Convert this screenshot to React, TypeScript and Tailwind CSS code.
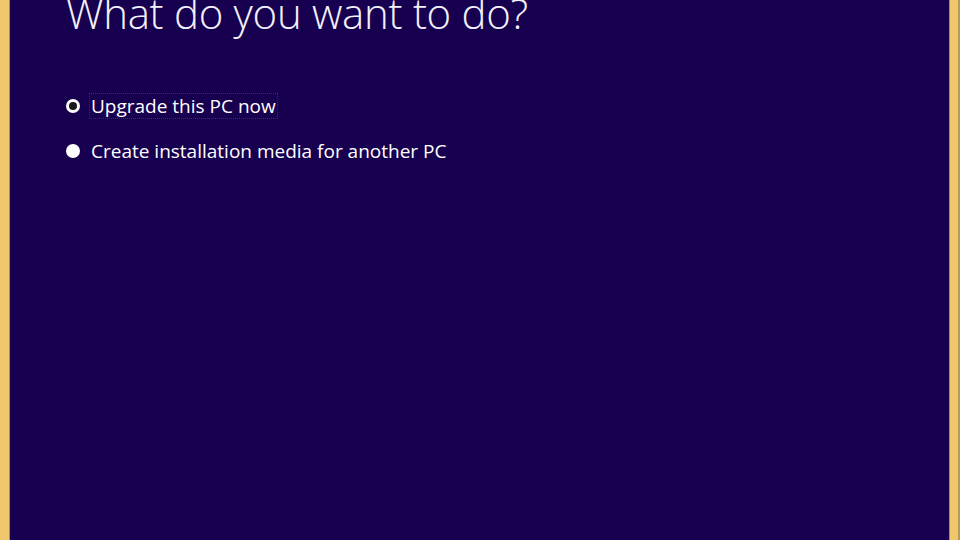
export default function App() {
  return (
    <div className="flex h-[540px] w-[960px] overflow-hidden bg-[#f0c76a]">
      <div className="w-[9px] shrink-0" />
      <div className="w-px shrink-0 bg-[#a08a7a]" />
      <main className="flex-1 bg-[#180050] pl-[56px] font-['Open_Sans',sans-serif] text-white">
        <h1 className="-mt-[15px] text-[42px] font-light leading-[56px] tracking-[-0.3px] text-[#f2f0f8]">
          What do you want to do?
        </h1>
        <div className="mt-[52px] flex flex-col gap-[19px]">
          <label className="flex items-center gap-[9px]">
            <span className="flex h-[14px] w-[14px] items-center justify-center rounded-full bg-white">
              <span className="h-[8px] w-[8px] rounded-full bg-[#1a1a1a]" />
            </span>
            <span className="border border-dotted border-[#3a2a70] px-px text-[19px] leading-[24px]">
              Upgrade this PC now
            </span>
          </label>
          <label className="flex items-center gap-[9px]">
            <span className="h-[14px] w-[14px] rounded-full bg-white" />
            <span className="border border-transparent px-px text-[19px] leading-[24px]">
              Create installation media for another PC
            </span>
          </label>
        </div>
      </main>
      <div className="w-px shrink-0 bg-[#a08a7a]" />
      <div className="w-[8px] shrink-0" />
      <div className="w-[2px] shrink-0 bg-[#b89a58]" />
    </div>
  )
}
